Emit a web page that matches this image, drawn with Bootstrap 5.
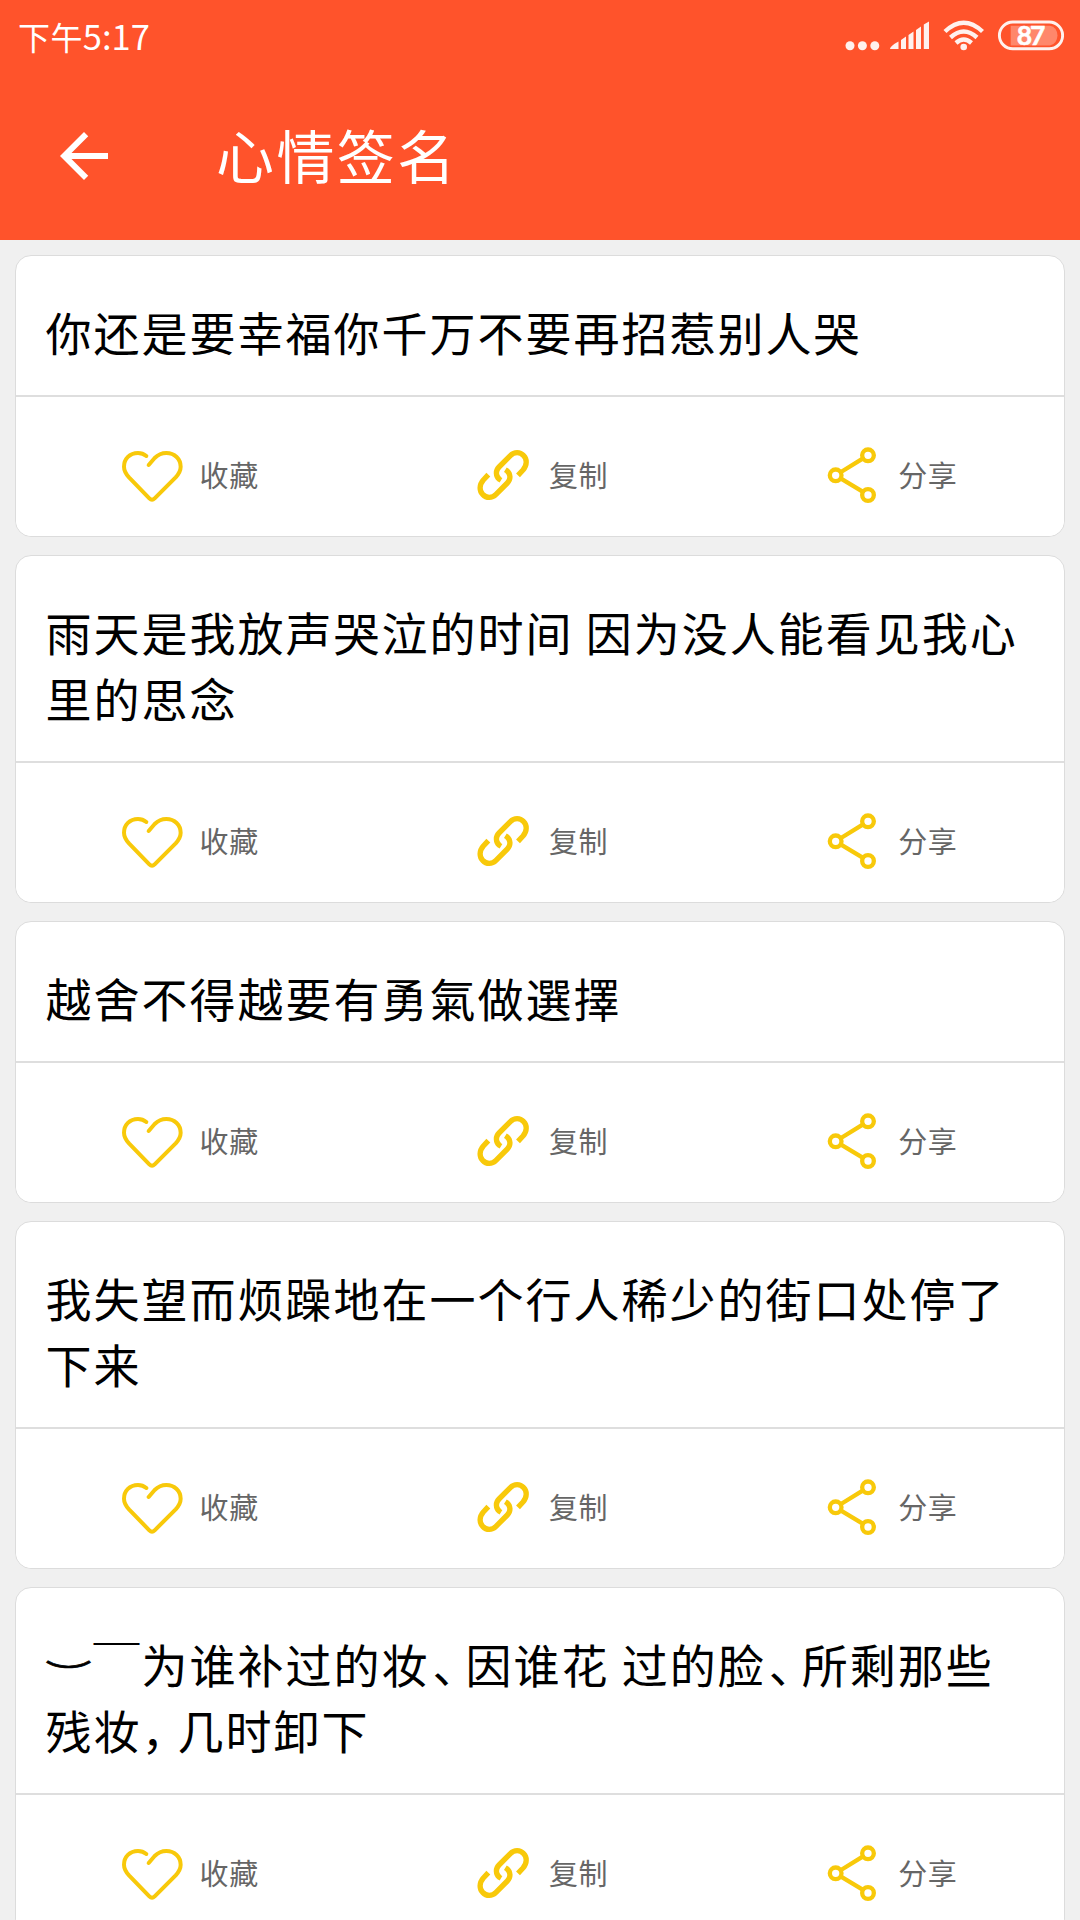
<!DOCTYPE html>
<html lang="zh-CN">
<head>
<meta charset="utf-8">
<meta name="viewport" content="width=device-width, initial-scale=1">
<title>心情签名</title>
<link href="https://cdn.jsdelivr.net/npm/bootstrap@5.3.0/dist/css/bootstrap.min.css" rel="stylesheet">
<style>
  body { height: 1920px; background: #f0f0f0; color: #000; font-family: "Noto Sans CJK SC", sans-serif; }
  .app-top { height: 240px; background: #ff532b; }
  .status-bar { height: 72px; padding: 0 16px 0 18px; }
  .clock { font-size: 32px; line-height: 70px; letter-spacing: .4px; }
  .clock .digits { font-size: 34.5px; letter-spacing: 0; }
  .title-bar { height: 168px; padding-left: 48px; }
  .title-bar h1 { margin: -4px 0 0 96px; font-size: 58px; line-height: 84px; letter-spacing: 2.4px; }
  .feed { padding: 15px 15px 0; gap: 18px; }
  .quote { border: 1px solid #dcdcdc; border-radius: 16px; flex: none; }
  .quote .card-body { padding: 42px 20px 31px 29.5px; }
  .quote p { font-size: 46px; line-height: 66px; letter-spacing: 2px; white-space: nowrap; }
  .quote .tight { font-feature-settings: "halt"; margin: 0 8px 0 3px; }
  .quote .tight-comma { font-feature-settings: "halt"; margin-right: 11px; }
  .quote .bow { display: inline-block; line-height: 1; transform: translateY(9px) scaleY(.6); -webkit-text-stroke: 1px #000; }
  .quote .card-footer { height: 141px; padding: 15px 0 0; border-top: 2px solid #dedede; }
  .act { color: #666; }
  .act svg { width: 64px; height: 64px; margin-top: 3px; fill: none; stroke: #f8c90a; stroke-linecap: round; stroke-linejoin: round; }
  .act span { font-size: 29px; line-height: 40px; letter-spacing: .6px; margin: -1px 1px 0 14px; }
</style>
</head>
<body class="overflow-hidden">
<svg class="d-none">
  <symbol id="i-heart" viewBox="65 41 192 192"><path stroke-width="12" d="M138 77Q127 68 113 68C88 68 71 86 71 109C71 122 77 131 86 141L147 204Q155 212 163 204L226 141C235 131 241 122 241 109C241 86 223 68 198 68C184 68 172 74 163 83L145 104"/></symbol>
  <symbol id="i-link" viewBox="33 41 192 192"><path stroke-width="16" stroke-linecap="butt" d="M174 135L189 119C202 104 201 86 191 76C180 64 163 64 151 76L117 110C106 121 107 137 118 147L123 150M85 133L70 149C57 164 58 182 68 192C79 204 96 204 108 192L142 158C153 147 152 131 141 121L136 118"/></symbol>
  <symbol id="i-share" viewBox="30 41 192 192"><g stroke-width="13"><circle cx="174" cy="75" r="17.500"/><circle cx="77" cy="135" r="17.500"/><circle cx="174" cy="194" r="17.500"/><path d="M93 125L158 85M93 145L158 184"/></g></symbol>
</svg>

<header class="app-top text-white">
  <div class="status-bar d-flex justify-content-between">
    <div class="clock">下午<span class="digits">5:17</span></div>
    <svg width="220" height="72" viewBox="844 0 220 72" fill="#fff" fill-opacity=".92">
      <circle cx="850" cy="45.7" r="4.5"/><circle cx="862.4" cy="45.7" r="4.5"/><circle cx="874.8" cy="45.7" r="4.5"/>
      <path d="M890 49Q890 46 898.5 41.5V49ZM901 40L906 36.500V49H901ZM908.500 35L913.500 31.500V49H908.500ZM916 30L921 26.500V49H916ZM923.800 24.500L929 21.500V49H923.800Z"/>
      <g fill="none" stroke="#fff" stroke-opacity=".92" stroke-width="4.400">
        <path d="M945 31.500Q963.700 14 982.500 31.500M950.500 37.500Q963.700 25.500 977 37.500M956 43Q963.700 36 971.500 43"/>
        <rect x="999.400" y="22" width="63.200" height="26.800" rx="13.400" stroke-width="2.900"/>
      </g>
      <circle cx="963.700" cy="47" r="3.300"/>
      <path d="M1010.700 25.700H1050Q1057 27 1057.500 35.500Q1057 44 1050 45.500H1010.700Z" fill-opacity=".3"/>
      <text x="1030" y="45.200" text-anchor="middle" font-family="Lato, sans-serif" font-weight="700" font-size="26.500" letter-spacing="-2" fill-opacity="1" stroke="#fff" stroke-width=".5">87</text>
    </svg>
  </div>
  <div class="title-bar d-flex align-items-center">
    <svg width="72" height="72" viewBox="0 0 24 24" fill="#fff"><path d="M20 11H7.830l5.590-5.590L12 4l-8 8 8 8 1.410-1.410L7.830 13H20v-2z"/></svg>
    <h1 class="fw-normal">心情签名</h1>
  </div>
</header>

<main class="feed d-flex flex-column">
  <article class="card quote">
    <div class="card-body"><p class="mb-0">你还是要幸福你千万不要再招惹别人哭</p></div>
    <div class="card-footer d-flex bg-white rounded-bottom-4"></div>
  </article>
  <article class="card quote">
    <div class="card-body"><p class="mb-0">雨天是我放声哭泣的时间 因为没人能看见我心<br>里的思念</p></div>
    <div class="card-footer d-flex bg-white rounded-bottom-4"></div>
  </article>
  <article class="card quote">
    <div class="card-body"><p class="mb-0">越舍不得越要有勇氣做選擇</p></div>
    <div class="card-footer d-flex bg-white rounded-bottom-4"></div>
  </article>
  <article class="card quote">
    <div class="card-body"><p class="mb-0">我失望而烦躁地在一个行人稀少的街口处停了<br>下来</p></div>
    <div class="card-footer d-flex bg-white rounded-bottom-4"></div>
  </article>
  <article class="card quote">
    <div class="card-body"><p class="mb-0"><span class="bow">︶</span>￣为谁补过的妆<span class="tight">、</span>因谁花 过的脸<span class="tight">、</span>所剩那些<br>残妆<span class="tight-comma">，</span>几时卸下</p></div>
    <div class="card-footer d-flex bg-white rounded-bottom-4"></div>
  </article>
</main>

<script src="https://cdn.jsdelivr.net/npm/bootstrap@5.3.0/dist/js/bootstrap.bundle.min.js"></script>
<script>
  // Every card carries the same three actions.
  const actions = [['heart', '收藏'], ['link', '复制'], ['share', '分享']];
  document.querySelectorAll('.card-footer').forEach(f => {
    f.innerHTML = actions.map(([icon, label]) =>
      `<div class="act col-4 d-flex align-items-center justify-content-center"><svg><use href="#i-${icon}"/></svg><span>${label}</span></div>`).join('');
  });
</script>
</body>
</html>
